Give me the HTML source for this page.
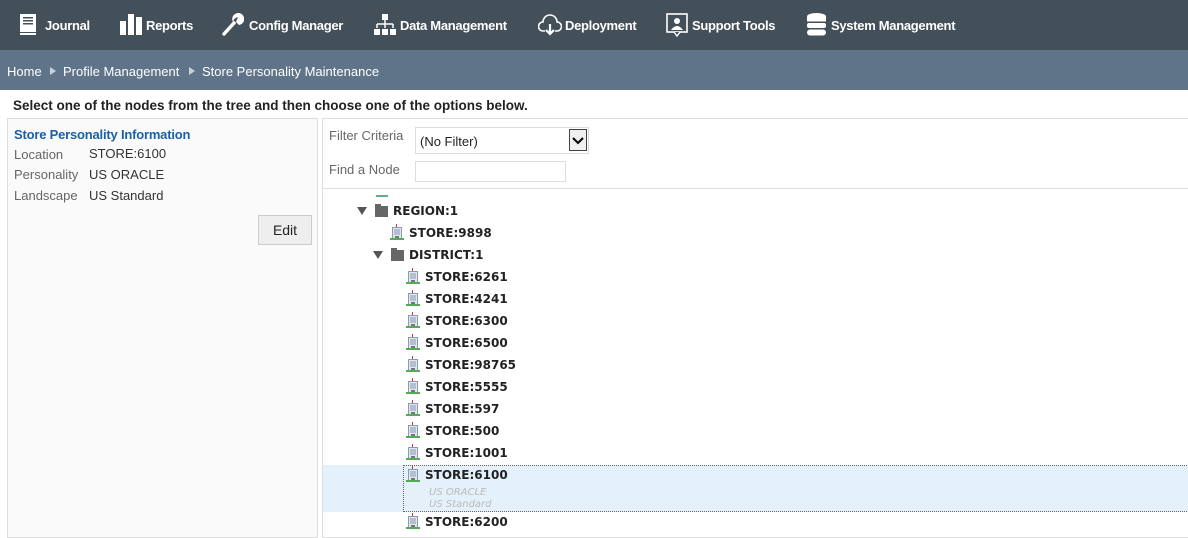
<!DOCTYPE html><html><head><style>
*{margin:0;padding:0;box-sizing:border-box}
body{width:1188px;height:533px;overflow:hidden;background:#fff;font-family:"Liberation Sans",Arial,sans-serif;font-size:13px;color:#333;position:relative}
.nav{position:absolute;left:0;top:0;width:1188px;height:50px;background:#434f59;color:#fff;font-weight:bold;font-size:13px;letter-spacing:-0.3px}
.nav span{position:absolute;top:18px}
.nav svg{position:absolute}
.bc{position:absolute;top:50px;left:0;width:1188px;height:40px;background:#5f7488;color:#fff;font-size:13px}
.bc span{position:absolute;top:14px}
.bc i{position:absolute;top:17px;width:0;height:0;border-left:6px solid #c8d2dc;border-top:4px solid transparent;border-bottom:4px solid transparent}
.hint{position:absolute;left:13px;top:98px;font-weight:bold;font-size:13.5px;color:#222}
.lp{position:absolute;left:7px;top:118px;width:311px;height:420px;background:#fafafa;border:1px solid #ddd}
.rp{position:absolute;left:322px;top:118px;width:870px;height:420px;background:#fff;border:1px solid #ddd}
.abs{position:absolute}
.g{color:#666}
.t{position:absolute;font-family:"DejaVu Sans",Verdana,sans-serif;font-weight:bold;font-size:12px;color:#222;margin-top:1px}
.tri{position:absolute;width:0;height:0;border-top:8px solid #555;border-left:5px solid transparent;border-right:5px solid transparent}
.fold{position:absolute;width:13px;height:11px;background:#666}
.fold:before{content:"";position:absolute;left:0;top:-2px;width:6px;height:2px;background:#666}
</style></head><body>
<div class="nav">
<svg style="left:20px;top:14px" width="16" height="21" viewBox="0 0 16 21"><rect x="0" y="0" width="16" height="18" fill="#fff"/><rect x="3" y="3" width="10" height="1.5" fill="#434f59"/><rect x="3" y="6" width="10" height="1.5" fill="#434f59"/><rect x="3" y="9" width="10" height="1.5" fill="#434f59"/><rect x="0" y="19" width="16" height="2" fill="#fff"/></svg>
<span style="left:45px">Journal</span>
<svg style="left:120px;top:14px" width="22" height="21"><rect x="0" y="7" width="6" height="14" fill="#fff"/><rect x="8" y="0" width="6" height="21" fill="#fff"/><rect x="16" y="3" width="6" height="18" fill="#fff"/></svg>
<span style="left:146px">Reports</span>
<svg style="left:222px;top:13px" width="22" height="23" viewBox="0 0 22 23"><path d="M2 21 L12 10" stroke="#fff" stroke-width="3.5" stroke-linecap="round"/><path d="M11 9 A6 6 0 1 1 17 12 L14 9 L16 4 A6 6 0 0 0 11 9Z" fill="#fff"/></svg>
<span style="left:249px">Config Manager</span>
<svg style="left:374px;top:14px" width="22" height="22"><rect x="8" y="0" width="6" height="6" fill="#fff"/><path d="M11 6V10M3 10H19M3 10V14M11 10V14M19 10V14" stroke="#fff" stroke-width="1.5" fill="none"/><rect x="0" y="15" width="6" height="6" fill="#fff"/><rect x="8" y="15" width="6" height="6" fill="#fff"/><rect x="16" y="15" width="6" height="6" fill="#fff"/></svg>
<span style="left:400px">Data Management</span>
<svg style="left:538px;top:14px" width="24" height="22"><path d="M7 17H5A4.5 4.5 0 0 1 5 8A7 7 0 0 1 19 8A4.5 4.5 0 0 1 19 17H17" stroke="#fff" stroke-width="1.6" fill="none"/><path d="M12 10V19M8 16L12 20L16 16" stroke="#fff" stroke-width="2.2" fill="none"/></svg>
<span style="left:565px">Deployment</span>
<svg style="left:666px;top:13px" width="22" height="24"><rect x="1" y="1" width="20" height="18" stroke="#fff" stroke-width="1.6" fill="none"/><circle cx="11" cy="8" r="3" fill="#fff"/><path d="M5 17Q11 9 17 17Z" fill="#fff"/><path d="M8 19L11 23L14 19" fill="#434f59" stroke="#fff" stroke-width="1.4"/></svg>
<span style="left:692px">Support Tools</span>
<svg style="left:807px;top:13px" width="19" height="24"><ellipse cx="9.5" cy="3.5" rx="9.5" ry="3.5" fill="#fff"/><rect x="0" y="3.5" width="19" height="5" fill="#fff"/><rect x="0" y="10" width="19" height="5" rx="2" fill="#fff"/><rect x="0" y="16.5" width="19" height="6" rx="3" fill="#fff"/></svg>
<span style="left:831px">System Management</span>
</div>
<div class="bc"><span style="left:7px">Home</span><i style="left:50px"></i><span style="left:63px">Profile Management</span><i style="left:189px"></i><span style="left:202px">Store Personality Maintenance</span></div>
<div class="hint">Select one of the nodes from the tree and then choose one of the options below.</div>
<div class="lp">
<div class="abs" style="left:6px;top:8px;color:#1a5fa8;font-weight:bold;font-size:13px;letter-spacing:-0.2px">Store Personality Information</div>
<div class="abs g" style="left:6px;top:28px">Location</div><div class="abs" style="left:81px;top:27px">STORE:6100</div>
<div class="abs g" style="left:6px;top:48px">Personality</div><div class="abs" style="left:81px;top:48px">US ORACLE</div>
<div class="abs g" style="left:6px;top:69px">Landscape</div><div class="abs" style="left:81px;top:69px">US Standard</div>
<div class="abs" style="left:250px;top:96px;width:54px;height:30px;background:#eee;border:1px solid #ccc;font-size:14px;text-align:center;line-height:28px;color:#222">Edit</div>
</div>
<div class="rp">
<div class="abs g" style="left:6px;top:9px">Filter Criteria</div>
<div class="abs" style="left:92px;top:8px;width:174px;height:27px;border:1px solid #ddd;background:#fff"><span class="abs" style="left:4px;top:6px;color:#222">(No Filter)</span><div class="abs" style="left:153px;top:1px;width:18px;height:22px;border:1px solid #444;background:#f0f0f0"><svg width="16" height="20"><path d="M3 8L8 13L13 8" stroke="#000" stroke-width="2" fill="none"/></svg></div></div>
<div class="abs g" style="left:6px;top:43px">Find a Node</div>
<div class="abs" style="left:92px;top:42px;width:151px;height:21px;border:1px solid #ddd;background:#fff"></div>
<div class="abs" style="left:0;top:69px;width:870px;height:1px;background:#ddd"></div>
<div class="abs" style="left:53px;top:76px;width:12px;height:2px;background:#6a8"></div>
<div class="abs" style="left:0;top:346px;width:870px;height:47px;background:#e4f0fa"></div>
<div class="abs" style="left:80px;top:346px;width:790px;height:47px;border:1px dotted #666"></div>
<div class="abs" style="left:106px;top:368px;font-family:'DejaVu Sans',Verdana,sans-serif;font-style:italic;font-size:10px;color:#bbb;line-height:12px">US ORACLE<br>US Standard</div>
</div>
<svg width="0" height="0" style="position:absolute"><defs><g id="st"><rect x="6" y="0" width="1" height="3" fill="#c33"/><rect x="2" y="3" width="10" height="12" fill="#8a9bb0"/><rect x="3" y="4" width="8" height="10" fill="#dfe6ee"/><path d="M4 6H10M4 8H10M4 10H10" stroke="#8a9bb0"/><rect x="5" y="12" width="4" height="3" fill="#777"/><rect x="0" y="14" width="14" height="2" fill="#5a5"/></g></defs></svg>
<div class="tri" style="left:357px;top:207px"></div><div class="fold" style="left:375px;top:206px"></div><div class="t" style="left:393px;top:203px">REGION:1</div>
<svg class="abs" style="left:390px;top:224px" width="14" height="16"><use href="#st"/></svg><div class="t" style="left:409px;top:225px">STORE:9898</div>
<div class="tri" style="left:373px;top:251px"></div><div class="fold" style="left:391px;top:250px"></div><div class="t" style="left:409px;top:247px">DISTRICT:1</div>
<svg class="abs" style="left:406px;top:268px" width="14" height="16"><use href="#st"/></svg><div class="t" style="left:425px;top:269px">STORE:6261</div>
<svg class="abs" style="left:406px;top:290px" width="14" height="16"><use href="#st"/></svg><div class="t" style="left:425px;top:291px">STORE:4241</div>
<svg class="abs" style="left:406px;top:312px" width="14" height="16"><use href="#st"/></svg><div class="t" style="left:425px;top:313px">STORE:6300</div>
<svg class="abs" style="left:406px;top:334px" width="14" height="16"><use href="#st"/></svg><div class="t" style="left:425px;top:335px">STORE:6500</div>
<svg class="abs" style="left:406px;top:356px" width="14" height="16"><use href="#st"/></svg><div class="t" style="left:425px;top:357px">STORE:98765</div>
<svg class="abs" style="left:406px;top:378px" width="14" height="16"><use href="#st"/></svg><div class="t" style="left:425px;top:379px">STORE:5555</div>
<svg class="abs" style="left:406px;top:400px" width="14" height="16"><use href="#st"/></svg><div class="t" style="left:425px;top:401px">STORE:597</div>
<svg class="abs" style="left:406px;top:422px" width="14" height="16"><use href="#st"/></svg><div class="t" style="left:425px;top:423px">STORE:500</div>
<svg class="abs" style="left:406px;top:444px" width="14" height="16"><use href="#st"/></svg><div class="t" style="left:425px;top:445px">STORE:1001</div>
<svg class="abs" style="left:406px;top:466px" width="14" height="16"><use href="#st"/></svg><div class="t" style="left:425px;top:467px">STORE:6100</div>
<svg class="abs" style="left:406px;top:513px" width="14" height="16"><use href="#st"/></svg><div class="t" style="left:425px;top:514px">STORE:6200</div>
</body></html>
